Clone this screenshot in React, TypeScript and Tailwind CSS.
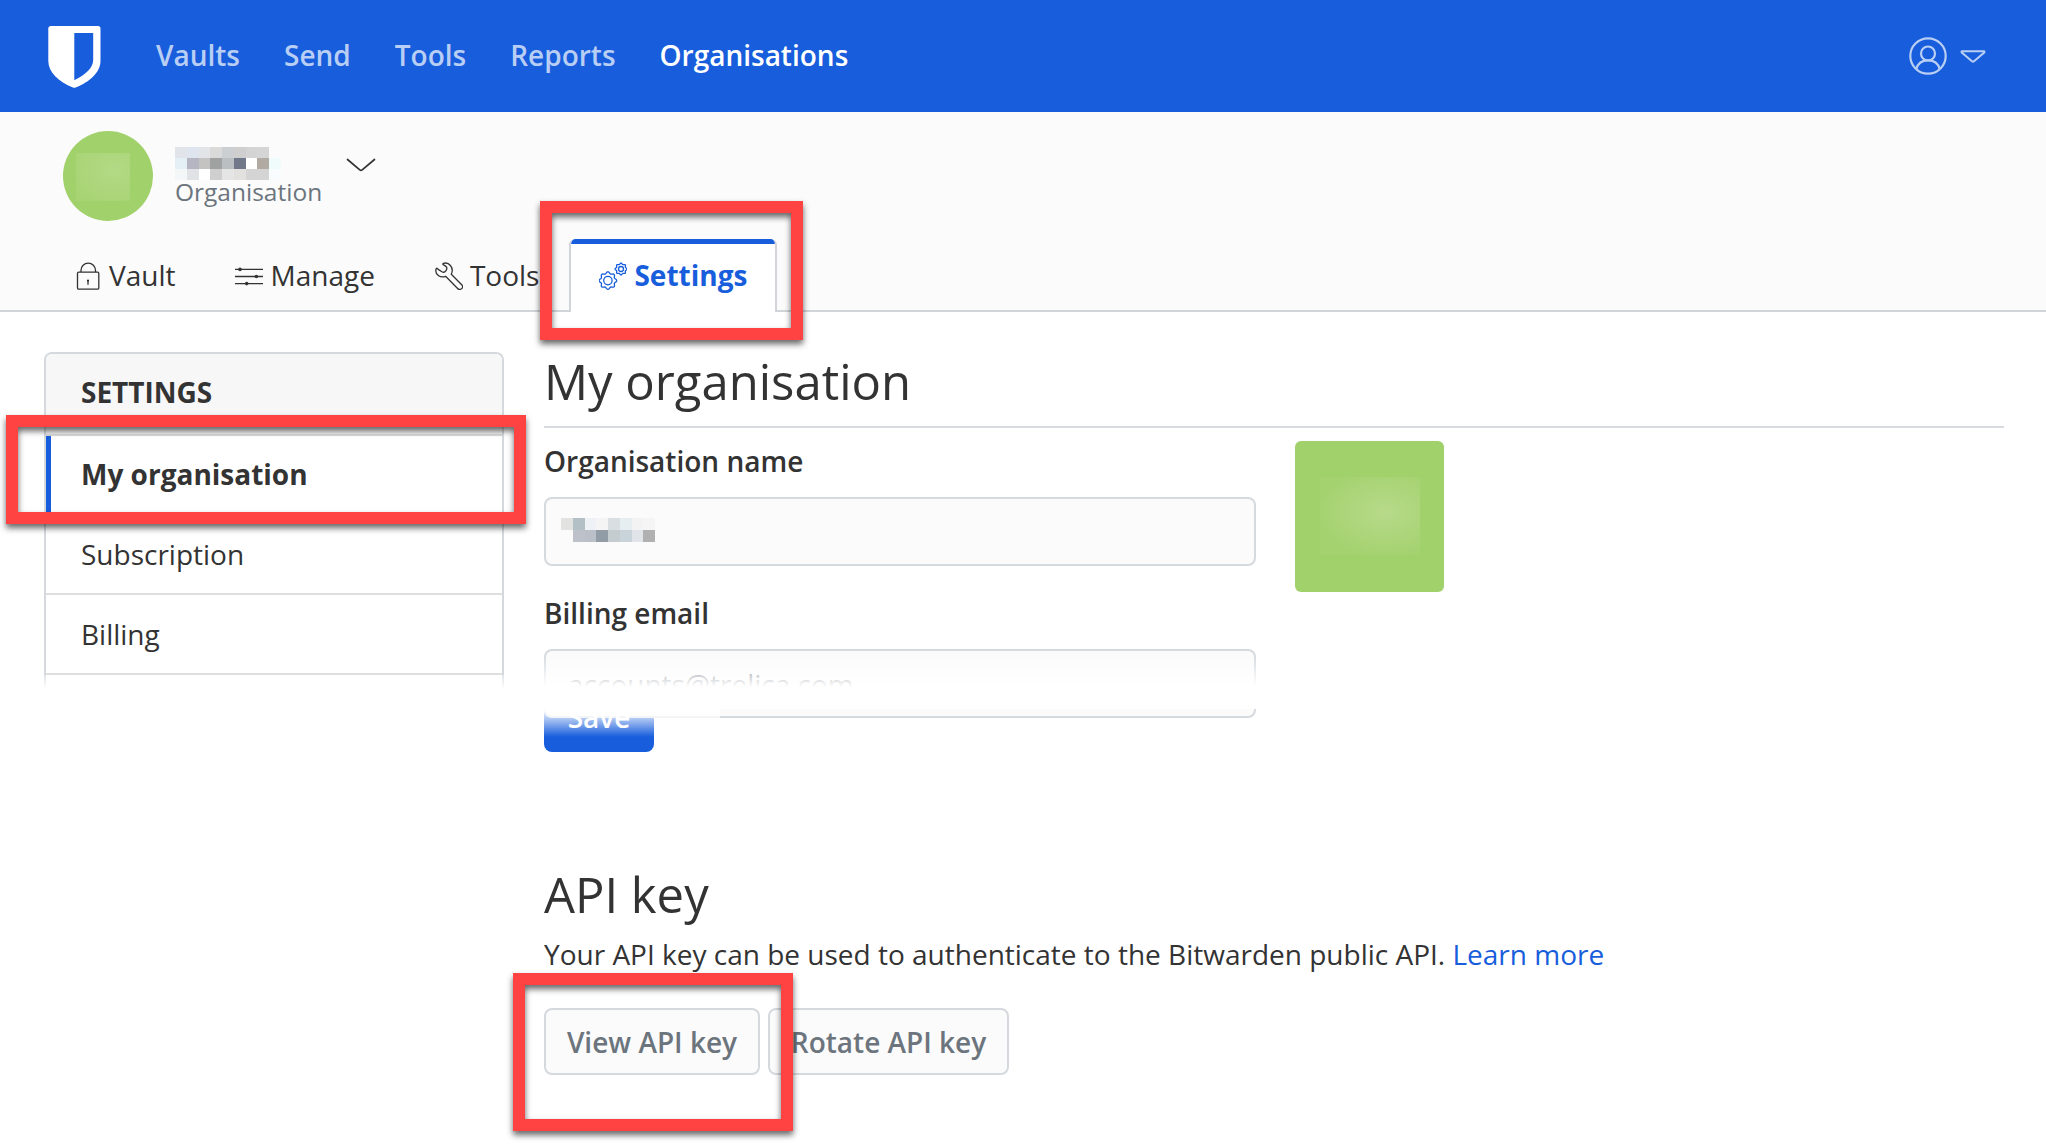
import React from 'react';

type IconProps = { className?: string };

const ShieldLogo: React.FC<IconProps> = ({ className }) => (
  <svg className={className} viewBox="0 0 53 62" fill="none">
    <path
      fill="#fff"
      fillRule="evenodd"
      d="M3 0H50Q52.5 0 52.5 2.5V35C52.5 46 42 56 27.600 61.500Q26.300 62 25 61.500C10.500 56 0.300 46 0.300 35V2.500Q0.300 0 3 0ZM26.300 7V54.200C38 48.500 45.200 41.500 45.200 34V7Z"
    />
  </svg>
);

const UserIcon: React.FC<IconProps> = ({ className }) => (
  <svg className={className} viewBox="0 0 38 38" fill="none" stroke="currentColor" strokeWidth="2.2">
    <circle cx="19" cy="19" r="17.700" />
    <circle cx="19" cy="16.500" r="7" />
    <path d="M7.300 32C8.800 26.600 13.300 23.400 19 23.400S29.200 26.600 30.700 32" />
  </svg>
);

const CaretIcon: React.FC<IconProps> = ({ className }) => (
  <svg className={className} viewBox="0 0 26 13" fill="none" stroke="currentColor" strokeWidth="2" strokeLinejoin="round">
    <path d="M2 1.200H24Q25 1.800 24 2.800L14 11.300Q13 12.200 12 11.300L2 2.800Q1 1.800 2 1.200Z" />
  </svg>
);

const ChevronIcon: React.FC<IconProps> = ({ className }) => (
  <svg className={className} viewBox="0 0 30 14" fill="none" stroke="currentColor" strokeWidth="1.700" strokeLinecap="round" strokeLinejoin="round">
    <path d="M1.500 1.500L13.800 11.800Q15 12.800 16.200 11.800L28.500 1.500" />
  </svg>
);

const LockIcon: React.FC<IconProps> = ({ className }) => (
  <svg className={className} viewBox="0 0 28 28" fill="none" stroke="currentColor" strokeWidth="1.300">
    <rect x="3.500" y="10.200" width="21.300" height="17" rx="1.200" />
    <path d="M7 10V8.300A7.250 7.250 0 0 1 21.500 8.300V10" />
    <path d="M14 18V22.800" />
    <circle cx="14" cy="18.700" r="1.100" fill="currentColor" stroke="none" />
  </svg>
);

const SlidersIcon: React.FC<IconProps> = ({ className }) => (
  <svg className={className} viewBox="0 0 28 28" fill="none" stroke="currentColor" strokeWidth="1.300">
    <path d="M0 7.400H28M0 14.500H28M0 21.600H28" />
    <g fill="currentColor" stroke="none">
      <circle cx="5" cy="7.400" r="1.800" />
      <circle cx="21.400" cy="14.500" r="1.800" />
      <circle cx="11.700" cy="21.600" r="1.800" />
    </g>
  </svg>
);

const WrenchIcon: React.FC<IconProps> = ({ className }) => (
  <svg className={className} viewBox="0 0 28 28" fill="none" stroke="currentColor" strokeWidth="1.300" strokeLinejoin="round">
    <path d="M1.400 6.200C0.200 9 1.200 12 3.600 13.700C5.800 15.200 8.200 15.300 10.600 14.300L22.600 26.500C23.800 27.800 25.700 27.700 26.800 26.600C27.900 25.500 27.800 23.900 26.700 22.800L16.300 12.200C17.700 9.300 17.400 6 15.400 3.500C13.600 1.300 10.800 0.600 8.300 1.400C7.700 1.600 7.700 2.300 8.200 2.600L10.600 4.100C11.900 5 12.100 6.600 11.300 8L10.900 8.700C10 10.100 8.300 10.500 6.900 9.700L3.600 7.600C2.900 7.200 2.200 6.200 1.400 6.200Z" />
  </svg>
);

// Closed wavy outline with one lobe per tooth
const gearPath = (cx: number, cy: number, radius: number, depth: number, teeth: number) => {
  const points: string[] = [];
  for (let i = 0; i < 96; i++) {
    const angle = (i / 96) * Math.PI * 2;
    const r = radius + depth * Math.cos(teeth * angle);
    points.push(`${(cx + r * Math.sin(angle)).toFixed(2)} ${(cy - r * Math.cos(angle)).toFixed(2)}`);
  }
  return `M${points.join('L')}Z`;
};

const GearsIcon: React.FC<IconProps> = ({ className }) => (
  <svg className={className} viewBox="0 0 28 28" fill="none" stroke="currentColor" strokeWidth="1.300">
    <path d={gearPath(8.900, 18.600, 7.900, 0.900, 8)} />
    <circle cx="8.900" cy="18.600" r="4.200" />
    <path d={gearPath(22, 7, 5.300, 0.600, 8)} />
    <circle cx="22" cy="7" r="2.500" />
  </svg>
);

const navItems = [
  { label: 'Vaults', active: false },
  { label: 'Send', active: false },
  { label: 'Tools', active: false },
  { label: 'Reports', active: false },
  { label: 'Organisations', active: true },
];

const tabs = [
  { label: 'Vault', icon: LockIcon, active: false },
  { label: 'Manage', icon: SlidersIcon, active: false },
  { label: 'Tools', icon: WrenchIcon, active: false },
  { label: 'Settings', icon: GearsIcon, active: true },
];

const headerMosaic = [
  ['#e1e4e9', '#dfe5ef', '#e3e4e7', '#dadada', '#cccfd2', '#cfcfcf', '#d4d4d4', '#d5d5d5', '#fbfbfb'],
  ['#e4f0f6', '#b6b6c2', '#c4c3c2', '#a0a2a1', '#babfc1', '#70788a', '#ffffff', '#b0aaa2', '#f0fbfc'],
  ['#f3f7f8', '#e1e2e6', '#ffffff', '#cfcfcf', '#e5e5e5', '#e2e1e0', '#d4d4d4', '#d4d4d4', '#f8fcfc'],
];

const inputMosaic = [
  ['#e2e2e0', '#b3c0c6', '#eef1f5', '#f4f4f5', '#d8dee2', '#e6eef2', '#f3f3f3', '#f5f5f5'],
  ['#fbfbfb', '#bdc1c9', '#bbbfc8', '#919ca6', '#c5cccf', '#c8d4d9', '#e1e5e9', '#b1b1b1'],
];

const Mosaic: React.FC<{ rows: string[][]; className?: string }> = ({ rows, className = '' }) => (
  <div className={`flex flex-col ${className}`}>
    {rows.map((row, r) => (
      <div key={r} className="flex flex-1">
        {row.map((color, c) => (
          <div key={c} className="flex-1" style={{ backgroundColor: color }} />
        ))}
      </div>
    ))}
  </div>
);

const Highlight: React.FC<{ className: string }> = ({ className }) => (
  <div className={`pointer-events-none absolute z-20 border-12 border-[#ff4343] drop-shadow-[0_4px_3px_rgba(0,0,0,0.6)] ${className}`} />
);

const App: React.FC = () => {
  return (
    <div className="relative h-[1146px] w-[2046px] overflow-hidden bg-white font-['Open_Sans',sans-serif] text-[28px] leading-[42px] text-[#333333]">
      <header className="flex h-[112px] items-center bg-[#175ddc] pr-[60px] pb-[3px] pl-12">
        <ShieldLogo className="mt-[5px] h-[62px] w-[53px]" />
        <nav className="ml-[55px] flex flex-1 gap-[44px] font-semibold">
          {navItems.map(item => (
            <a key={item.label} className={item.active ? 'text-white' : 'text-[#b9cef4]'}>{item.label}</a>
          ))}
        </nav>
        <div className="flex items-center gap-[13px] text-[#b9cef4]">
          <UserIcon className="mt-[2px] size-[38px]" />
          <CaretIcon className="mt-[3px] h-[13px] w-[26px]" />
        </div>
      </header>

      <div className="flex h-[200px] flex-col justify-between border-b-2 border-[#d1d4d9] bg-[#fbfbfb] pl-11">
        <div className="flex pt-[19px] pl-[19px]">
          <div className="flex size-[90px] rounded-full bg-[#a1d16a] pt-[22px] pl-[13px]">
            <div className="h-12 w-[54px] bg-radial-[at_70%_35%] from-[#b3d985] to-[#a6d371]" />
          </div>
          <div className="ml-[22px] w-[150px] pt-4">
            <Mosaic rows={headerMosaic} className="h-[33px] w-[106px]" />
            <div className="mt-[-5px] text-[24.5px] leading-[34px] text-[#6c757d]">Organisation</div>
          </div>
          <ChevronIcon className="mt-[27px] ml-[21px] h-[14px] w-[30px]" />
        </div>
        <div className="mb-[-2px] flex">
          {tabs.map(({ label, icon: Icon, active }) => (
            <div
              key={label}
              className={`relative flex h-[73px] items-center gap-[7px] overflow-hidden rounded-t-md border-x-2 px-7 pb-[1px] ${
                active ? 'border-[#d1d4d9] bg-white font-bold text-[#175ddc]' : 'border-transparent'
              }`}
            >
              {active && <div className="absolute -inset-x-0.5 top-0 h-[5px] bg-[#175ddc]" />}
              <Icon className="mt-[2px] size-7" />
              <span>{label}</span>
            </div>
          ))}
        </div>
      </div>

      <div className="flex pr-[42px] pl-11">
        <aside className="mt-10 h-[340px] w-[460px] shrink-0 rounded-t-lg border-2 border-b-0 border-[#d5d9de]">
          <div className="h-[82px] rounded-t-md border-b-2 border-[#dcdcdc] bg-[#f7f7f7] pt-[17px] pl-[35px] font-bold">SETTINGS</div>
          <div className="h-[79px] border-b-2 border-l-[5px] border-b-[#dfdfdf] border-l-[#175ddc] pt-[17px] pl-[30px] font-bold">My organisation</div>
          <div className="h-20 border-b-2 border-[#dfdfdf] pt-[18px] pl-[35px]">Subscription</div>
          <div className="h-20 border-b-2 border-[#dfdfdf] pt-[18px] pl-[35px]">Billing</div>
        </aside>

        <main className="ml-10 flex-1">
          <h1 className="h-[116px] border-b-2 border-[#d8dbe0] pt-10 text-[49px] leading-[59px]">My organisation</h1>
          <div className="flex">
            <div className="w-[712px]">
              <label className="block pt-3 font-semibold">Organisation name</label>
              <div className="mt-[15px] flex h-[69px] rounded-lg border-2 border-[#d5dadf] bg-[#fbfbfb] pt-[19px] pl-[15px]">
                <Mosaic rows={inputMosaic} className="h-6 w-[94px]" />
              </div>
              <label className="mt-[25px] block pt-[1px] font-semibold">Billing email</label>
              <div className="mt-[15px] h-[69px] rounded-lg border-2 border-[#d5dadf] bg-[#fbfbfb] pt-[12px] pl-[22px] text-[#6f747d]">accounts@trelica.com</div>
            </div>
            <div className="mt-[13px] ml-[39px] flex h-[151px] w-[149px] rounded-md bg-[#a1d16a] pt-9 pl-[25px]">
              <div className="h-[78px] w-[100px] bg-radial-[at_65%_45%] from-[#b7da8a] to-[#a4d26f] to-75%" />
            </div>
          </div>

          <button className="mt-[-36px] block h-[70px] w-[110px] rounded-lg bg-[#175ddc] font-semibold text-white">Save</button>

          <h2 className="mt-[113px] text-[49px] leading-[59px]">API key</h2>
          <p className="mt-[9px]">
            Your API key can be used to authenticate to the Bitwarden public API. <a className="text-[#175ddc]">Learn more</a>
          </p>
          <div className="mt-[33px] flex gap-2 font-semibold text-[#6c757d]">
            <button className="h-[67px] w-[216px] rounded-lg border-2 border-[#d5d9de] bg-[#fbfbfb]">View API key</button>
            <button className="h-[67px] w-[241px] rounded-lg border-2 border-[#d5d9de] bg-[#fbfbfb]">Rotate API key</button>
          </div>
        </main>
      </div>

      {/* Fade that hides the middle of the form */}
      <div className="absolute top-[655px] left-[520px] z-10 h-[32px] w-[800px] bg-linear-to-b from-white/0 to-white" />
      <div className="absolute top-[675px] left-0 z-10 h-[15px] w-[520px] bg-linear-to-b from-white/30 to-white" />
      <div className="absolute top-[687px] left-0 z-10 h-[22px] w-[1320px] bg-white" />
      <div className="absolute top-[709px] left-[520px] z-10 h-[28px] w-[200px] bg-linear-to-b from-white to-white/0" />

      <Highlight className="top-[201px] left-[540px] h-[139px] w-[263px]" />
      <Highlight className="top-[415px] left-[6px] h-[109px] w-[520px]" />
      <Highlight className="top-[973px] left-[513px] h-[158px] w-[280px]" />
    </div>
  );
};

export default App;
